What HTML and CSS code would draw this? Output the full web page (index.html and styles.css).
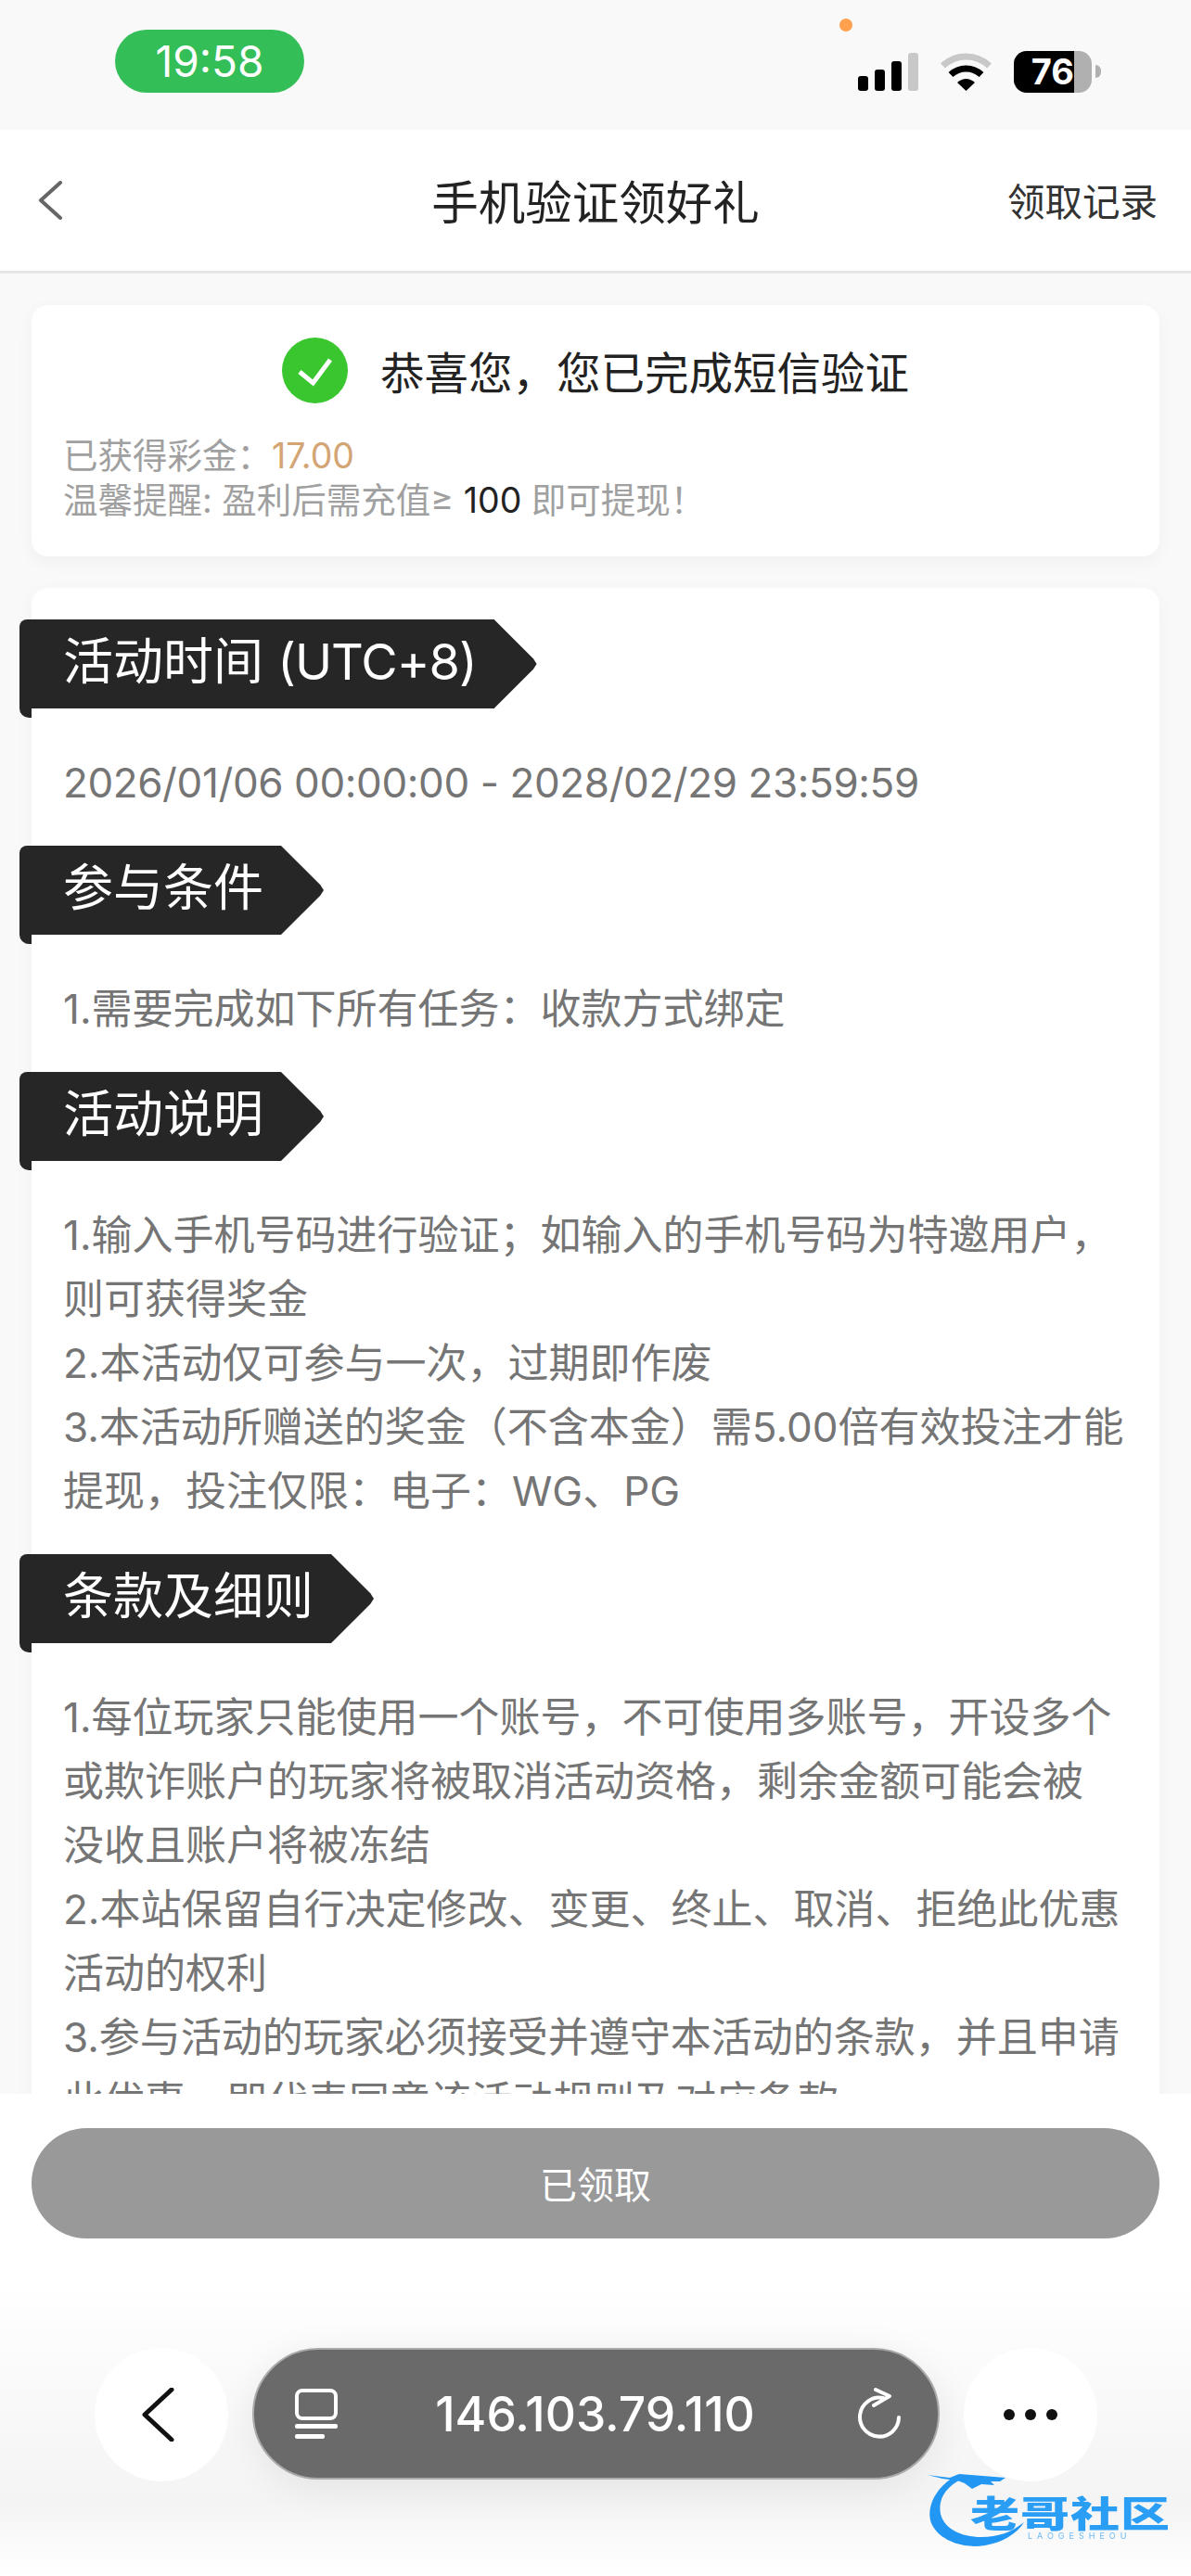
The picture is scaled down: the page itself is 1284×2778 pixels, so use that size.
FILE: index.html
```html
<!DOCTYPE html>
<html lang="zh-CN">
<head>
  <meta charset="UTF-8" />
  <meta name="viewport" content="width=device-width, initial-scale=1" />
  <title>手机验证领好礼</title>
  <link rel="stylesheet" href="styles.css">
</head>
<body>

  <!-- Status bar -->
  <div class="status-bar">
    <div class="clock">19:58</div>
    <span class="orange-dot"></span>
    <div class="status-icons">
      <div class="signal">
        <i class="bar-1"></i><i class="bar-2"></i><i class="bar-3"></i><i class="bar-4"></i>
      </div>
      <svg class="wifi" width="57" height="42" viewBox="0 0 57 42">
        <path d="M3.5 15 A36 36 0 0 1 53.5 15" fill="none" stroke="#c8c8c8" stroke-width="7"/>
        <path d="M12 24.5 A24 24 0 0 1 45 24.5" fill="none" stroke="#000" stroke-width="7"/>
        <path d="M19 33 Q28.5 25 38 33 L28.5 42 Z" fill="#000"/>
      </svg>
      <div class="battery">
        <div class="battery-fill">76</div>
      </div>
      <span class="battery-tip"></span>
    </div>
  </div>

  <!-- Nav -->
  <div class="nav">
    <svg class="nav-back" width="26" height="42" viewBox="0 0 26 42">
      <path d="M24 2 L3 21 L24 40" fill="none" stroke="#666" stroke-width="4" stroke-linecap="round" stroke-linejoin="round"/>
    </svg>
    <h1>手机验证领好礼</h1>
    <a class="nav-link">领取记录</a>
  </div>

  <div class="content">
    <!-- Result card -->
    <div class="card result">
      <div class="result-title">
        <svg width="71" height="71" viewBox="0 0 71 71">
          <circle cx="35.5" cy="35.5" r="35.5" fill="#3ac62f"/>
          <path d="M19 37 L33.5 49 L52 24" fill="none" stroke="#fff" stroke-width="5"/>
        </svg>
        <span>恭喜您，您已完成短信验证</span>
      </div>
      <p class="result-line">已获得彩金：<span class="money">17.00</span></p>
      <p class="result-line">温馨提醒: 盈利后需充值≥ <span class="dark">100</span> 即可提现！</p>
    </div>

    <!-- Rules card -->
    <div class="card rules">
      <div class="tag">活动时间 <span class="tag-en">(UTC+8)</span></div>
      <p class="rule-text date">2026/01/06 00:00:00 - 2028/02/29 23:59:59</p>

      <div class="tag">参与条件</div>
      <p class="rule-text">1.需要完成如下所有任务：收款方式绑定</p>

      <div class="tag">活动说明</div>
      <p class="rule-text">1.输入手机号码进行验证；如输入的手机号码为特邀用户，则可获得奖金<br>2.本活动仅可参与一次，过期即作废<br>3.本活动所赠送的奖金（不含本金）需5.00倍有效投注才能提现，投注仅限：电子：WG、PG</p>

      <div class="tag">条款及细则</div>
      <p class="rule-text">1.每位玩家只能使用一个账号，不可使用多账号，开设多个或欺诈账户的玩家将被取消活动资格，剩余金额可能会被<br>没收且账户将被冻结<br>2.本站保留自行决定修改、变更、终止、取消、拒绝此优惠活动的权利<br>3.参与活动的玩家必须接受并遵守本活动的条款，并且申请此优惠，即代表同意该活动规则及对应条款。</p>
    </div>
  </div>

  <!-- Bottom panel and browser bar -->
  <div class="footer">
    <div class="claim-wrap">
      <button class="claim">已领取</button>
    </div>
    <div class="browser-bar">
      <div class="round-btn">
        <svg class="bar-back" width="35" height="58" viewBox="0 0 35 58">
          <path d="M32 2 L3 29 L32 56" fill="none" stroke="#111" stroke-width="5" stroke-linecap="round" stroke-linejoin="round"/>
        </svg>
      </div>
      <div class="url-pill">
        <svg width="46" height="54" viewBox="0 0 46 54">
          <rect x="2" y="2" width="42" height="30" rx="6" fill="none" stroke="#fff" stroke-width="4"/>
          <rect x="0" y="38" width="46" height="5" rx="2" fill="#fff"/>
          <rect x="0" y="49" width="32" height="5" rx="2" fill="#fff"/>
        </svg>
        <span class="url">146.103.79.110</span>
        <svg width="48" height="56" viewBox="0 0 48 56">
          <path d="M28 11 A21 21 0 1 0 45 32" fill="none" stroke="#fff" stroke-width="4" stroke-linecap="round"/>
          <path d="M20 2 L35 9 L18 19" fill="none" stroke="#fff" stroke-width="4" stroke-linecap="round" stroke-linejoin="round"/>
        </svg>
      </div>
      <div class="round-btn">
        <div class="dots"><i></i><i></i><i></i></div>
      </div>
    </div>
  </div>

  <!-- Watermark -->
  <div class="watermark">
    <svg class="dragon" width="110" height="84" viewBox="0 0 110 84">
      <path d="M30 5 C8 18 -2 40 4 56 C12 74 36 84 62 80 C80 77 96 68 104 55 C90 66 76 71 58 71 C36 71 18 62 14 46 C11 30 20 16 38 8 Z" fill="#2196f3"/>
      <path d="M0 4 L24 7 L34 3 L84 7 L78 11 L68 11 L72 15 L58 14 L48 19 L40 13 L32 10 L16 8 Z" fill="#2196f3"/>
    </svg>
    <div class="wm-name">老哥社区</div>
    <div class="wm-sub">LAOGESHEOU</div>
  </div>

</body>
</html>
```

FILE: styles.css
```css
* {
  box-sizing: border-box;
}
html, body {
  margin: 0;
  padding: 0;
}
body {
  width: 1284px;
  height: 2778px;
  overflow: hidden;
  position: relative;
  display: flex;
  flex-direction: column;
  background: #f9f9f9;
  font-family: Inter, "Noto Sans CJK SC", sans-serif;
}

/* status bar */
.status-bar {
  height: 140px;
  flex: none;
  position: relative;
  display: flex;
  justify-content: space-between;
  padding: 32px 97px 0 124px;
}
.clock {
  width: 204px;
  height: 68px;
  border-radius: 34px;
  background: #34be57;
  color: #fff;
  font-size: 46px;
  line-height: 68px;
  text-align: center;
}
.orange-dot {
  position: absolute;
  left: 905px;
  top: 20px;
  width: 14px;
  height: 14px;
  border-radius: 50%;
  background: #ffa14f;
}
.status-icons {
  display: flex;
  align-items: flex-end;
  height: 66px;
}
.signal {
  display: flex;
  align-items: flex-end;
  gap: 7px;
  margin-right: 23px;
}
.signal i {
  display: block;
  width: 11px;
  border-radius: 3px;
  background: #000;
}
.bar-1 { height: 16px; }
.bar-2 { height: 23px; }
.bar-3 { height: 32px; }
.signal .bar-4 { height: 41px; background: #c8c8c8; }
.wifi {
  margin-right: 23px;
}
.battery {
  width: 84px;
  height: 45px;
  margin-bottom: -2px;
  border-radius: 14px;
  overflow: hidden;
  background: #b0b0b0;
}
.battery-fill {
  width: 65px;
  height: 45px;
  background: #000;
  color: #fff;
  font-size: 38px;
  font-weight: 700;
  line-height: 45px;
  text-align: right;
}
.battery-tip {
  width: 6px;
  height: 14px;
  margin: 0 0 14px 4px;
  border-radius: 0 7px 7px 0;
  background: #b0b0b0;
}

/* nav */
.nav {
  height: 155px;
  flex: none;
  position: relative;
  display: flex;
  align-items: center;
  justify-content: center;
  background: #fff;
  border-bottom: 3px solid #e5e5e5;
}
.nav h1 {
  margin: 0 0 2px;
  font-size: 50.5px;
  font-weight: 400;
  color: #222;
}
.nav-back {
  position: absolute;
  left: 41px;
  top: 55px;
}
.nav-link {
  position: absolute;
  right: 36px;
  top: 46px;
  font-size: 40.5px;
  color: #333;
}

/* content */
.content {
  flex: 1;
  overflow: hidden;
  padding: 34px 34px 0;
}
.card {
  background: #fff;
  border-radius: 18px;
  box-shadow: 0 6px 20px rgba(0,0,0,0.04);
}
.result {
  height: 271px;
  padding: 35px 34px 0;
  margin-bottom: 34px;
}
.result-title {
  display: flex;
  align-items: center;
  justify-content: center;
  gap: 35px;
  margin-bottom: 33px;
  font-size: 47.5px;
  color: #222;
}
.result-line {
  margin: 0;
  font-size: 37.5px;
  line-height: 48px;
  color: #a0a0a0;
}
.money {
  color: #d4a574;
}
.dark {
  color: #222;
}
.rules {
  padding: 34px 34px 40px;
}
.tag {
  position: relative;
  width: fit-content;
  height: 96px;
  margin-left: -47px;
  padding: 0 19px 0 47px;
  border-radius: 8px 0 0 0;
  background: #262626;
  color: #fff;
  font-size: 54px;
  line-height: 92px;
}
.tag-en {
  letter-spacing: -1px;
}
.tag::before {
  content: "";
  position: absolute;
  left: 0;
  top: 100%;
  width: 13px;
  height: 10px;
  border-radius: 0 0 0 10px;
  background: #262626;
}
.tag::after {
  content: "";
  position: absolute;
  left: 100%;
  top: 0;
  width: 46px;
  height: 96px;
  background: #262626;
  clip-path: polygon(0 0, 92% 44%, 100% 50%, 92% 56%, 0 100%);
}
.rule-text {
  margin: 46px 0 33px;
  font-size: 44px;
  line-height: 69px;
  color: #757575;
}
.date {
  letter-spacing: -0.4px;
}

/* footer */
.footer {
  height: 520px;
  flex: none;
  position: relative;
  background: linear-gradient(#fff 0, #fff 200px, #f4f4f4 440px, #fff 520px);
}
.claim-wrap {
  padding: 37px 34px 0;
}
.claim {
  display: block;
  width: 100%;
  height: 119px;
  padding: 0 0 2px;
  border: none;
  border-radius: 60px;
  background: #999;
  color: #fff;
  font-family: inherit;
  font-size: 40px;
}
.browser-bar {
  display: flex;
  align-items: flex-start;
  padding: 118px 0 0 102px;
  gap: 26px;
}
.round-btn {
  width: 144px;
  height: 144px;
  flex: none;
  display: flex;
  align-items: center;
  justify-content: center;
  border-radius: 50%;
  background: #fff;
}
.bar-back {
  margin-right: 8px;
}
.url-pill {
  width: 741px;
  height: 142px;
  display: flex;
  align-items: center;
  justify-content: space-between;
  padding: 0 39px 0 44px;
  border-radius: 71px;
  background: #6a6a6a;
  border: 2px solid #aaa;
  box-shadow: 0 8px 40px rgba(0,0,0,0.08);
}
.url {
  margin-right: 5px;
  color: #fff;
  font-size: 51.5px;
  font-weight: 500;
}
.dots {
  display: flex;
  gap: 11px;
}
.dots i {
  display: block;
  width: 12px;
  height: 12px;
  border-radius: 50%;
  background: #111;
}

/* watermark */
.watermark {
  position: absolute;
  left: 1000px;
  top: 2665px;
  width: 270px;
  height: 84px;
  padding: 25px 0 0 46px;
  filter: blur(0.7px);
}
.dragon {
  position: absolute;
  left: 0;
  top: 0;
}
.wm-name {
  position: relative;
  font-family: "Noto Sans CJK SC", sans-serif;
  font-size: 53px;
  font-weight: 900;
  letter-spacing: 1px;
  line-height: 36px;
  color: #2a9df4;
  white-space: nowrap;
  transform: scaleY(0.72);
}
.wm-sub {
  margin: 4px 0 0 62px;
  font-size: 9px;
  line-height: 10px;
  letter-spacing: 5px;
  color: #6ab8f5;
  white-space: nowrap;
}
```
